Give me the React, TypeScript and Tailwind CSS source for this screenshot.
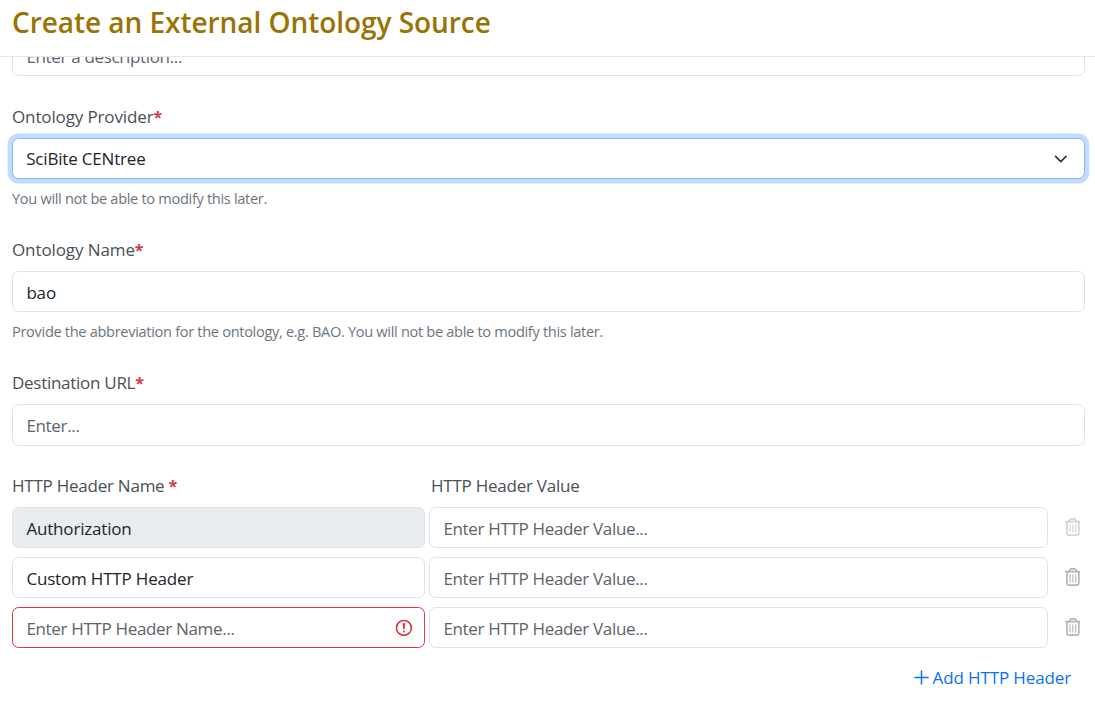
import React, { useState } from 'react';
import { FaRegTrashCan } from 'react-icons/fa6';

interface HeaderRow {
    id: number;
    name: string;
    value: string;
    locked?: boolean;
    invalid?: boolean;
}

const inputClass = "block w-full rounded-[6.6px] border border-[#dee2e6] bg-white px-[13.4px] pt-px text-[#212529] placeholder:text-[#5d6369] placeholder:tracking-[-0.33px] placeholder:opacity-100 outline-none";

const Asterisk = () => <span className="text-[16px] font-bold text-[#dc3545]">*</span>;

const Label: React.FC<{ children: React.ReactNode; className?: string }> = ({ children, className = 'tracking-[-0.24px]' }) => (
    <label className={`block h-[26px] leading-[26px] text-[#495057] ${className}`}>{children}</label>
);

const HelpText: React.FC<{ children: React.ReactNode }> = ({ children }) => (
    <div className="mt-[8px] h-[23px] text-[14.6px] leading-[22px] tracking-[-0.32px] text-[#6c757d]">{children}</div>
);

const Chevron = () => (
    <svg viewBox="0 0 16 16" className="pointer-events-none absolute right-[15px] top-[14px] h-[14px] w-[17.6px]" fill="none">
        <path d="m2 5 6 6 6-6" stroke="#343a40" strokeWidth="2" strokeLinecap="round" strokeLinejoin="round" />
    </svg>
);

const InvalidIcon = () => (
    <svg viewBox="0 0 12 12" className="pointer-events-none absolute right-[11px] top-[11px] h-[19.8px] w-[19.8px]" fill="none" stroke="#dc3545">
        <circle cx="6" cy="6" r="4.5" />
        <path strokeLinejoin="round" d="M5.8 3.6h.4L6 6.5z" />
        <circle cx="6" cy="8.2" r=".6" fill="#dc3545" stroke="none" />
    </svg>
);

const PlusIcon = () => (
    <svg viewBox="0 0 15 15" className="h-[15px] w-[15px]" fill="none" stroke="currentColor" strokeWidth="1.5" strokeLinecap="round">
        <path d="M7.5 .9v13.2M.9 7.5h13.2" />
    </svg>
);

export default function App() {
    const [rows, setRows] = useState<HeaderRow[]>([
        { id: 1, name: 'Authorization', value: '', locked: true },
        { id: 2, name: 'Custom HTTP Header', value: '' },
        { id: 3, name: '', value: '', invalid: true },
    ]);

    const updateRow = (id: number, field: 'name' | 'value', text: string) => {
        setRows(prev => prev.map(row => (row.id === id ? { ...row, [field]: text } : row)));
    };

    const addRow = () => {
        setRows(prev => [...prev, { id: Date.now(), name: '', value: '', invalid: true }]);
    };

    return (
        <div className="flex h-[703px] w-full flex-col overflow-hidden bg-white font-['Open_Sans','Noto_Sans',sans-serif] text-[17px] tracking-[-0.18px]">
            <header className="h-[57px] shrink-0 border-b border-[#e5e7ea] px-3">
                <h1 className="h-[44px] text-[28px] font-semibold leading-[44px] tracking-[-0.05px] text-[#997404]">Create an External Ontology Source</h1>
            </header>

            <div className="min-h-0 flex-1 overflow-hidden pl-3 pr-[10px]">
                {/* Description is scrolled half way under the header */}
                <input type="text" placeholder="Enter a description..." className={`${inputClass} -mt-[22px] h-[41px]`} />

                <div className="mt-[28px]">
                    <Label className="tracking-[-0.13px]">Ontology Provider<Asterisk /></Label>
                    <div className="relative mt-[8px]">
                        <select defaultValue="centree" className="block h-[41px] w-full appearance-none rounded-[6.6px] border border-[#86b7fe] bg-white px-[13.2px] text-[#212529] shadow-[0_0_0_4.4px_#c2dbfe] outline-none">
                            <option value="centree">SciBite CENtree</option>
                        </select>
                        <Chevron />
                    </div>
                    <HelpText>You will not be able to modify this later.</HelpText>
                </div>

                <div className="mt-[27px]">
                    <Label className="tracking-[-0.1px]">Ontology Name<Asterisk /></Label>
                    <input type="text" defaultValue="bao" className={`${inputClass} mt-[8px] h-[41px]`} />
                    <HelpText>Provide the abbreviation for the ontology, e.g. BAO. You will not be able to modify this later.</HelpText>
                </div>

                <div className="mt-[27px]">
                    <Label className="tracking-[-0.28px]">Destination URL<Asterisk /></Label>
                    <input type="text" placeholder="Enter..." className={`${inputClass} mt-[8px] h-[42px]`} />
                </div>

                <div className="mt-[27px]">
                    <div className="flex">
                        <div className="w-[419px]"><Label>HTTP Header Name <Asterisk /></Label></div>
                        <Label>HTTP Header Value</Label>
                    </div>
                    <div className="mt-[8px] flex flex-col gap-[9px]">
                        {rows.map(row => (
                            <div key={row.id} className="flex h-[41px]">
                                <div className="relative mr-1 w-[413px]">
                                    <input
                                        type="text"
                                        placeholder="Enter HTTP Header Name..."
                                        value={row.name}
                                        disabled={row.locked}
                                        onChange={(e) => updateRow(row.id, 'name', e.target.value)}
                                        className={`${inputClass} h-[41px] disabled:bg-[#e9ecef] ${row.invalid ? 'border-[#dc3545]!' : ''}`}
                                    />
                                    {row.invalid && <InvalidIcon />}
                                </div>
                                <div className="w-[619px]">
                                    <input
                                        type="text"
                                        placeholder="Enter HTTP Header Value..."
                                        value={row.value}
                                        onChange={(e) => updateRow(row.id, 'value', e.target.value)}
                                        className={`${inputClass} h-[41px]`}
                                    />
                                </div>
                                <button
                                    type="button"
                                    disabled={row.locked}
                                    onClick={() => setRows(prev => prev.filter(r => r.id !== row.id))}
                                    className="ml-[16.6px] mt-[11px] h-[18px] text-[#adb5bd] disabled:text-[#ced4da]"
                                >
                                    <FaRegTrashCan className="h-[18px] w-[15.75px]" />
                                </button>
                            </div>
                        ))}
                    </div>
                    <div className="mt-[16px] flex justify-end pr-[14px]">
                        <button type="button" onClick={addRow} className="flex h-[27px] items-center gap-1 tracking-[-0.12px] text-[#0d6efd]">
                            <PlusIcon /> Add HTTP Header
                        </button>
                    </div>
                </div>
            </div>
        </div>
    );
}
